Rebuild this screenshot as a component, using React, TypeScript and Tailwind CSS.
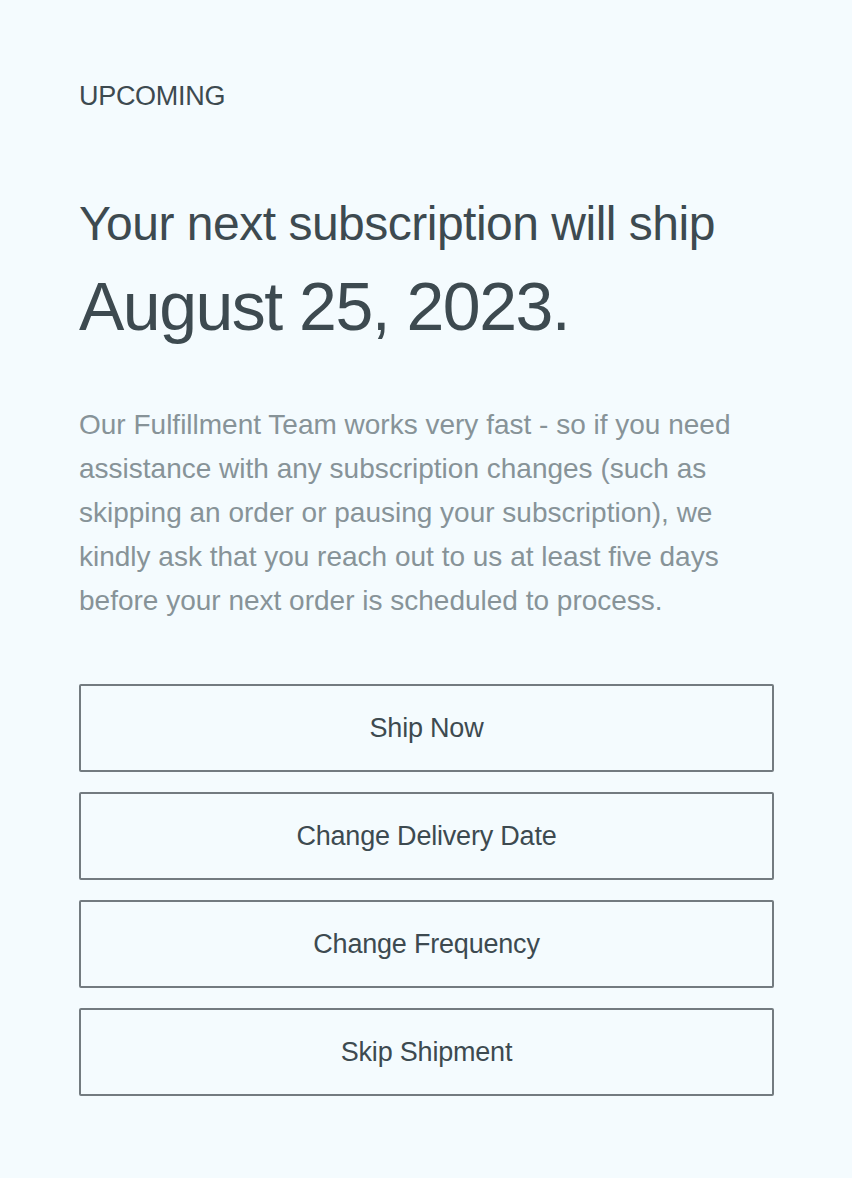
const actions = ["Ship Now", "Change Delivery Date", "Change Frequency", "Skip Shipment"];

export default function App() {
  return (
    <div className="min-h-[1178px] bg-[#f4fbfe] px-[79px] pt-[78px] pb-[80px] font-['Liberation_Sans',sans-serif] text-[#3d4a50]">
      <p className="text-[27px] leading-[36px] tracking-[-0.3px]">UPCOMING</p>

      <h1 className="mt-[82px]">
        <span className="block text-[48px] leading-[56px] tracking-[-0.5px]">Your next subscription will ship</span>
        <span className="block mt-[14px] text-[68px] leading-[80px] tracking-[-1.5px]">August 25, 2023.</span>
      </h1>

      <p className="mt-[57px] max-w-[665px] text-[28px] leading-[44px] text-[#879398]">
        Our Fulfillment Team works very fast - so if you need assistance with any subscription changes (such as
        skipping an order or pausing your subscription), we kindly ask that you reach out to us at least five days
        before your next order is scheduled to process.
      </p>

      <div className="mt-[61px] flex w-[695px] flex-col gap-[20px]">
        {actions.map((label) => (
          <button
            key={label}
            className="flex h-[88px] items-center justify-center rounded-[2px] border-2 border-[#737b80] text-[27px] tracking-[-0.2px] text-[#3d4a50]"
          >
            {label}
          </button>
        ))}
      </div>
    </div>
  );
}
